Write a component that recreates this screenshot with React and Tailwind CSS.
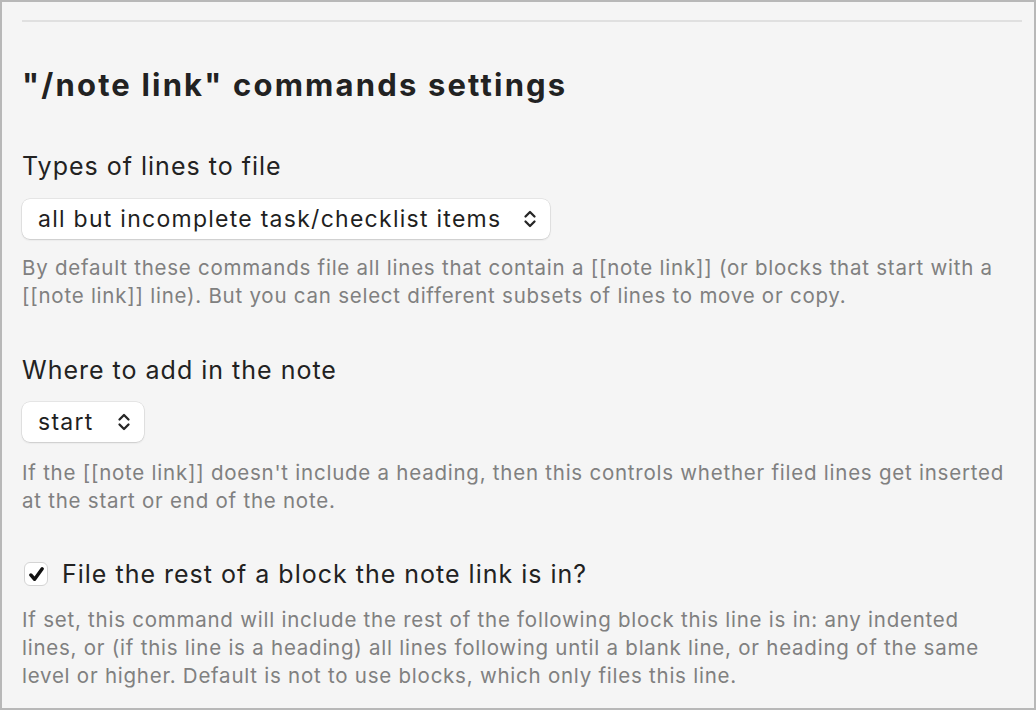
import React from 'react'

function Chevrons() {
  return (
    <svg viewBox="0 0 14 20" className="w-[14px] h-[20px]" fill="none" stroke="#262626" strokeWidth="2.3" strokeLinecap="round" strokeLinejoin="round">
      <path d="M2.5 7.5 7 3l4.5 4.5" />
      <path d="M2.5 12.5 7 17l4.5-4.5" />
    </svg>
  )
}

function Select({ value, width }) {
  return (
    <div className={`${width} h-[40px] bg-white rounded-[8px] shadow-[0_0_0_0.5px_rgba(0,0,0,0.12),0_1px_2px_rgba(0,0,0,0.12)] flex items-center justify-between pl-4 pr-[13px]`}>
      <span className="text-[23px] tracking-[0.055em] text-[#1f1f1f]">{value}</span>
      <Chevrons />
    </div>
  )
}

export default function App() {
  return (
    <div className="w-[1036px] h-[710px] bg-[#f5f5f5] border-2 border-[#b8b8b8] overflow-hidden" style={{ fontFamily: 'Inter, "Noto Sans", sans-serif' }}>
      <div className="pl-5 pr-3 pt-[18px]">
        <div className="h-[2px] bg-[#e0e0e0]" />

        <h1 className="mt-[45px] text-[31px] leading-[36px] font-bold tracking-[0.07em] text-[#222]">"/note link" commands settings</h1>

        <h2 className="mt-[47px] text-[25px] leading-[32px] tracking-[0.04em] text-[#222]">Types of lines to file</h2>
        <div className="mt-[17px]">
          <Select value="all but incomplete task/checklist items" width="w-[528px]" />
        </div>
        <p className="mt-[15px] pr-[6px] text-[20.5px] leading-[28px] tracking-[0.037em] text-[#808080]">
          By default these commands file all lines that contain a [[note link]] (or blocks that start with a [[note link]] line). But you can select different subsets of lines to move or copy.
        </p>

        <h2 className="mt-[44px] text-[25px] leading-[32px] tracking-[0.04em] text-[#222]">Where to add in the note</h2>
        <div className="mt-[16px]">
          <Select value="start" width="w-[122px]" />
        </div>
        <p className="mt-[17px] pr-[6px] text-[20.5px] leading-[28px] tracking-[0.037em] text-[#808080]">
          If the [[note link]] doesn't include a heading, then this controls whether filed lines get inserted at the start or end of the note.
        </p>

        <label className="mt-[43px] flex items-center gap-[14px] text-[25px] leading-[32px] tracking-[0.04em] text-[#222]">
          <span className="ml-[2px] w-[24px] h-[24px] rounded-[6px] bg-white border border-[#d4d4d4] flex items-center justify-center">
            <svg viewBox="0 0 20 20" className="w-[19px] h-[19px]" fill="none" stroke="#111" strokeWidth="3.6" strokeLinecap="round" strokeLinejoin="round">
              <path d="M4 10.5 8 15 16 4" />
            </svg>
          </span>
          File the rest of a block the note link is in?
        </label>
        <p className="mt-[16px] pr-[6px] text-[20.5px] leading-[28px] tracking-[0.037em] text-[#808080]">
          If set, this command will include the rest of the following block this line is in: any indented lines, or (if this line is a heading) all lines following until a blank line, or heading of the same level or higher. Default is not to use blocks, which only files this line.
        </p>
      </div>
    </div>
  )
}
